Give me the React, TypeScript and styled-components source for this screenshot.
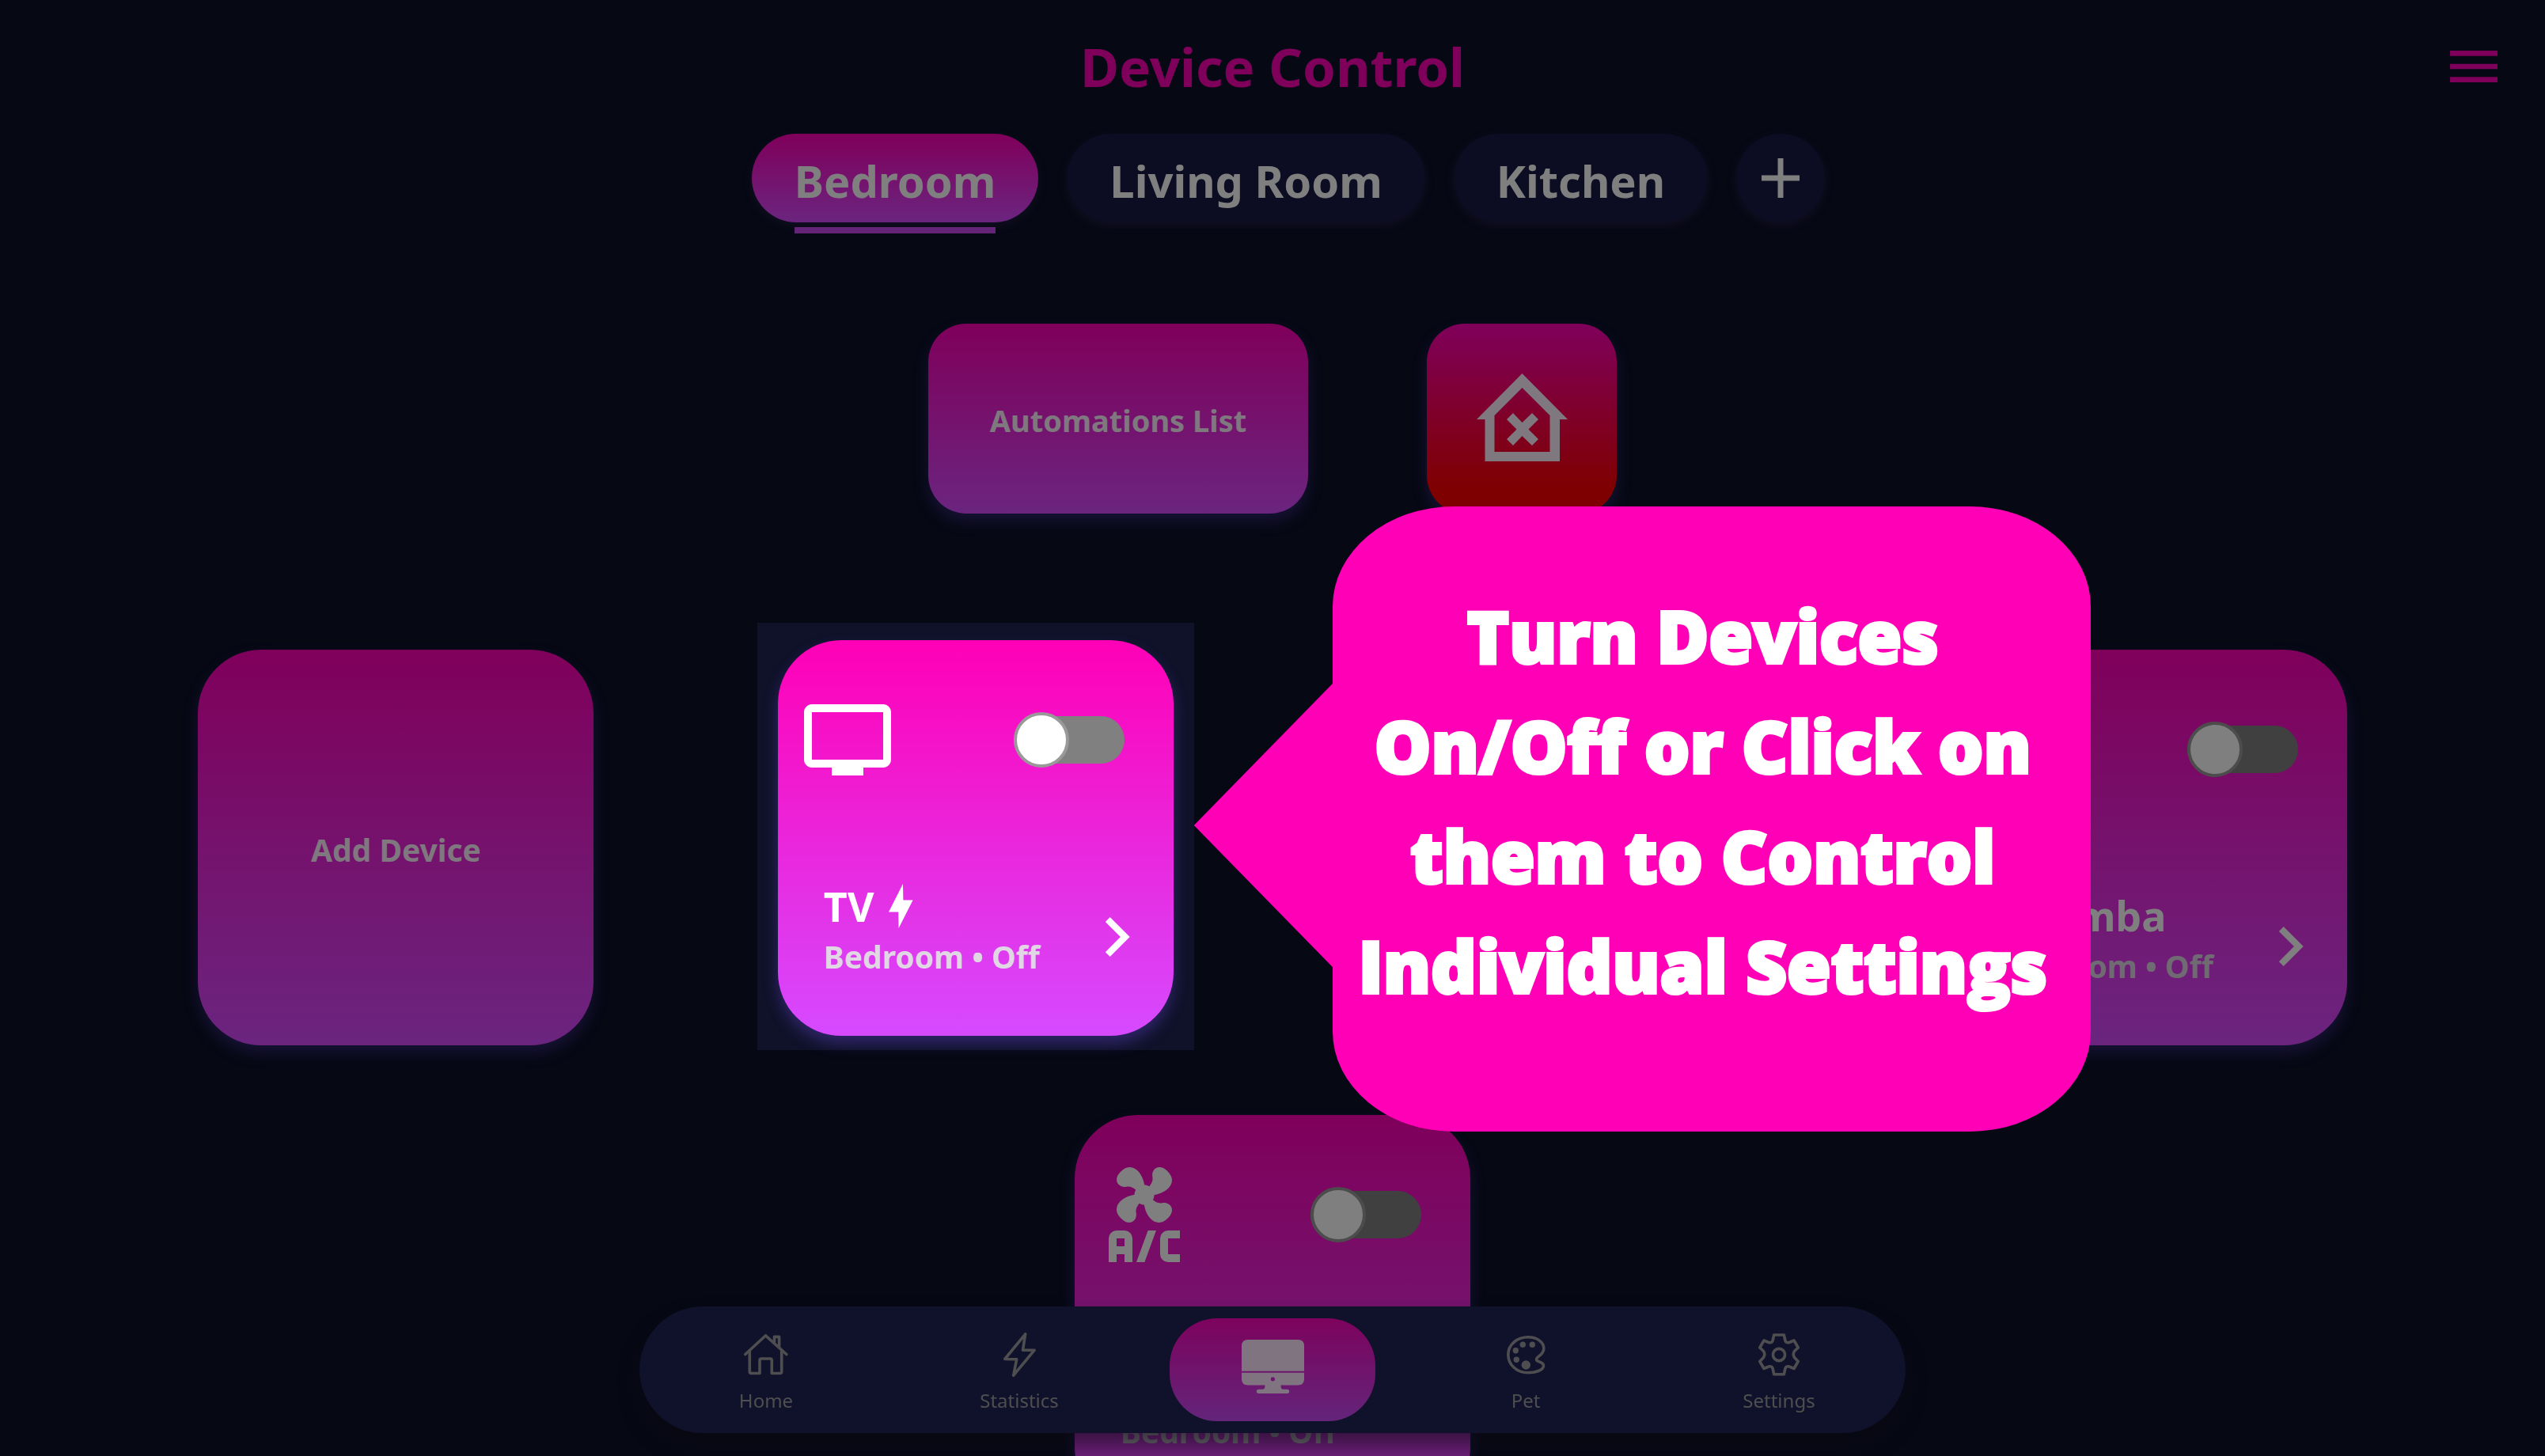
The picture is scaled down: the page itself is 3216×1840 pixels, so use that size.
import React from "react";
import styled, { createGlobalStyle } from "styled-components";
import { MdTv, MdChevronRight, MdMenu } from "react-icons/md";

const fontStack = `"Noto Sans", "Open Sans", sans-serif`;
const pinkToPurple = "linear-gradient(180deg, #ff00b6 0%, #d64aff 100%)";
const glow = "0 10px 18px rgba(94, 66, 200, 0.4)";

const GlobalStyle = createGlobalStyle`
  *, *::before, *::after { box-sizing: border-box; }
  body {
    margin: 0;
    overflow: hidden;
    background: #0c1028;
    color: #fff;
    font-family: ${fontStack};
  }
  button, input { font: inherit; color: inherit; margin: 0; }
  button { border: 0; padding: 0; background: none; cursor: pointer; }
  svg { display: block; flex: none; }
`;

const Page = styled.div`
  height: 100vh;
  overflow: hidden;
`;

const Header = styled.header`
  display: grid;
  grid-template-columns: 1fr auto 1fr;
  align-items: center;
  padding: 40px 50px 0;
`;

const Title = styled.h1`
  grid-column: 2;
  margin: 0;
  font-size: 67px;
  line-height: 88px;
  font-weight: 700;
  color: #ff00b6;
`;

const MenuButton = styled.button`
  justify-self: end;
  font-size: 80px;
  color: #ff00b6;
`;

const Tabs = styled.nav`
  display: flex;
  justify-content: center;
  gap: 36px;
  height: 126px;
  margin-top: 41px;
  padding-left: 40px;
`;

const TabItem = styled.div`
  display: flex;
  flex-direction: column;
`;

const Tab = styled.button<{ $active?: boolean }>`
  height: 112px;
  padding: 6px 54px 0;
  border-radius: 56px;
  font-size: 56px;
  font-weight: 700;
  white-space: nowrap;
  background: ${(p) => (p.$active ? pinkToPurple : "#181844")};
  box-shadow: 0 4px 12px rgba(88, 56, 128, 0.3);
`;

const TabUnderline = styled.span`
  height: 8px;
  margin: 6px 54px 0;
  background: #c84af0;
`;

const AddRoom = styled.button`
  display: grid;
  place-items: center;
  width: 112px;
  height: 112px;
  border-radius: 50%;
  background: #181844;
  box-shadow: 0 4px 12px rgba(88, 56, 128, 0.3);
`;

const Actions = styled.section`
  display: flex;
  justify-content: center;
  gap: 150px;
  margin-top: 114px;
`;

const ActionButton = styled.button<{ $danger?: boolean }>`
  display: flex;
  align-items: center;
  justify-content: center;
  width: ${(p) => (p.$danger ? "240px" : "480px")};
  height: 240px;
  padding-top: ${(p) => (p.$danger ? "0" : "4px")};
  border-radius: 48px;
  font-size: 38px;
  font-weight: 700;
  color: #fff0ff;
  background: ${(p) =>
    p.$danger ? "linear-gradient(180deg, #ff00b6 0%, #ff0000 88%)" : pinkToPurple};
  box-shadow: ${glow};
`;

const Devices = styled.main`
  display: flex;
  flex-wrap: wrap;
  justify-content: space-evenly;
  gap: 88px 140px;
  margin-top: 172px;
  padding: 0 152px;
`;

const Slot = styled.div`
  position: relative;
  width: 500px;
  height: 500px;
`;

const AddCard = styled.button`
  width: 100%;
  height: 100%;
  padding-top: 4px;
  border-radius: 80px;
  font-size: 39px;
  font-weight: 700;
  color: #fff0ff;
  background: ${pinkToPurple};
  box-shadow: ${glow};
`;

const Card = styled.article`
  display: flex;
  flex-direction: column;
  justify-content: space-between;
  width: 500px;
  height: 500px;
  padding: 66px 22px 54px 28px;
  border-radius: 80px;
  background: ${pinkToPurple};
  box-shadow: ${glow};
`;

const CardTop = styled.div`
  display: flex;
  align-items: center;
  justify-content: space-between;
  min-height: 120px;
  padding-right: 40px;
`;

const CardBottom = styled.div`
  display: flex;
  align-items: center;
  justify-content: space-between;
  padding-left: 30px;
`;

const CardText = styled.div`
  display: flex;
  flex-direction: column;
  gap: 6px;
  padding-bottom: 20px;
`;

const DeviceName = styled.h2`
  display: flex;
  align-items: center;
  gap: 18px;
  margin: 0;
  font-size: 52px;
  line-height: 64px;
  font-weight: 700;
`;

const DeviceState = styled.p`
  margin: 0;
  font-size: 39px;
  line-height: 52px;
  font-weight: 700;
  white-space: nowrap;
  color: #e0d6e4;
`;

const OpenButton = styled.button`
  font-size: 100px;
`;

const Switch = styled.input`
  position: relative;
  appearance: none;
  width: 140px;
  height: 60px;
  border-radius: 30px;
  background: #808080;
  cursor: pointer;

  &::before {
    content: "";
    position: absolute;
    top: -5px;
    left: 0;
    width: 70px;
    height: 70px;
    border: 4px solid #999;
    border-radius: 50%;
    background: #fff;
  }

  &:checked::before {
    left: 70px;
  }
`;

const NavBar = styled.nav`
  position: fixed;
  z-index: 3;
  left: 50%;
  bottom: 29px;
  display: flex;
  align-items: center;
  width: 1600px;
  max-width: 100%;
  height: 160px;
  transform: translateX(-50%);
  border-radius: 80px;
  background: #202254;
  box-shadow: 0 16px 24px rgba(24, 20, 40, 0.55);
`;

const NavLink = styled.a`
  flex: 1;
  display: flex;
  flex-direction: column;
  align-items: center;
  gap: 14px;
  padding-top: 8px;
  font-size: 24px;
  line-height: 32px;
  color: #9c9ca0;
  text-decoration: none;
`;

const NavIcon = styled.span`
  display: grid;
  place-items: center;
  height: 56px;
`;

const NavActive = styled.a`
  display: grid;
  place-items: center;
  width: 260px;
  height: 130px;
  margin: 0 30px;
  padding-bottom: 8px;
  border-radius: 60px;
  color: #ffe8ff;
  background: linear-gradient(180deg, #fa06bc 0%, #c64af4 100%);
`;

const Overlay = styled.div`
  position: fixed;
  z-index: 5;
  inset: 0;
  background: rgba(0, 0, 0, 0.5);
`;

const Highlight = styled.div`
  position: absolute;
  z-index: 10;
  inset: -34px -20px -6px -32px;
  padding: 22px 26px;
  background: #10122a;
`;

const Tip = styled.div`
  position: absolute;
  top: -147px;
  left: 100%;
  display: flex;
  align-items: center;
`;

const TipTail = styled.span`
  width: 176px;
  height: 360px;
  margin-top: 16px;
  background: #ff00b6;
  clip-path: polygon(100% 0, 100% 100%, 0 50%);
`;

const TipBody = styled.p`
  width: 958px;
  height: 790px;
  margin: 0 0 0 -1px;
  padding: 94px 22px 0 0;
  border-radius: 16%;
  background: #ff00b6;
  font-family: "Open Sans", "Noto Sans", sans-serif;
  font-size: 90px;
  line-height: 139px;
  font-weight: 800;
  font-variant-ligatures: none;
  text-align: center;
  white-space: nowrap;
  -webkit-text-stroke: 4px #fff;
`;

const PlusIcon = () => (
  <svg width="48" height="50" viewBox="0 0 48 50" fill="none" stroke="currentColor" strokeWidth="7">
    <path d="M24 0V50M0 25H48" />
  </svg>
);

const HomeOffIcon = () => (
  <svg width="115" height="115" viewBox="0 0 115 115" fill="currentColor">
    <path
      fillRule="evenodd"
      d="M57.5 0L115 58H105V111H10.5V58H0ZM57.5 18L22.5 53V99H92.5V53Z"
    />
    <path d="M46 50L57.5 62L70 50L78 58L65.5 70.5L78 83L70 91L57.5 79L46 91L38 83L50.5 70.5L38 58Z" />
  </svg>
);

const BoltIcon = () => (
  <svg width="31" height="56" viewBox="0 0 31 56" fill="currentColor">
    <path d="M0 35.5L18 0L18.4 20.4H30.6L12.6 56L12.2 35.5Z" />
  </svg>
);

const AirConditionerIcon = () => (
  <svg width="120" height="120" viewBox="0 0 24 24" fill="currentColor">
    <path d="M6.59,0.66C8.93,-1.15 11.47,1.06 12.04,4.5C12.47,4.5 12.89,4.62 13.27,4.84C13.79,4.24 14.25,3.42 14.07,2.5C13.65,0.35 16.06,-1.39 18.35,1.58C20.16,3.92 17.95,6.46 14.5,7.03C14.5,7.46 14.39,7.89 14.16,8.27C14.76,8.78 15.58,9.24 16.5,9.06C18.63,8.64 20.38,11.04 17.41,13.34C15.07,15.15 12.53,12.94 11.96,9.5C11.53,9.5 11.11,9.37 10.74,9.15C10.22,9.75 9.75,10.58 9.93,11.5C10.35,13.64 7.94,15.39 5.65,12.42C3.83,10.07 6.05,7.53 9.5,6.97C9.5,6.54 9.63,6.12 9.85,5.74C9.25,5.23 8.43,4.76 7.5,4.94C5.37,5.36 3.62,2.96 6.59,0.66M5,16H7A2,2 0 0,1 9,18V24H7V22H5V24H3V18A2,2 0 0,1 5,16M5,18V20H7V18H5M12.93,16H15L12.07,24H10L12.93,16M18,16H21V18H18V22H21V24H18A2,2 0 0,1 16,22V18A2,2 0 0,1 18,16Z" />
  </svg>
);

const lineIcon = {
  fill: "none",
  stroke: "currentColor",
  strokeWidth: 3.6,
  strokeLinejoin: "round" as const,
  strokeLinecap: "round" as const,
};

const HomeIcon = () => (
  <svg width="56" height="52" viewBox="0 0 56 52" {...lineIcon}>
    <path d="M1.8 25.5L27.5 1.8L53.8 25.5" />
    <path d="M7.3 21V47.5Q7.3 49.5 9.3 49.5H20V33Q20 31 22 31H33.3Q35.3 31 35.3 33V49.5H45.7Q47.7 49.5 47.7 47.5V21" />
    <path d="M38.5 10V3.4H44.6V16" />
  </svg>
);

const StatsIcon = () => (
  <svg width="41" height="56" viewBox="0 0 41 56" {...lineIcon}>
    <path d="M1.8 33.5L27.7 1.8L24.5 22.2H39.2L12.7 54.2L16.7 33.7Z" />
  </svg>
);

const PetIcon = () => (
  <svg width="49" height="49" viewBox="0 0 49 49" {...lineIcon}>
    <path d="M27 1.8C38 1.8 46.8 8 46.8 16C46.8 25 37.5 25.5 37.5 30C37.5 34 46.5 32 46.5 38C46.5 43.5 36 46.8 27 46.8C13 46.8 1.8 37 1.8 24C1.8 11 13 1.8 27 1.8Z" />
    <g fill="currentColor" stroke="none">
      <circle cx="11.3" cy="18.7" r="3.7" />
      <circle cx="20.3" cy="11.3" r="3.7" />
      <circle cx="32.3" cy="11.3" r="3.7" />
      <circle cx="12.3" cy="30.3" r="3.7" />
      <circle cx="24.3" cy="37" r="5.7" />
    </g>
  </svg>
);

const GearIcon = () => (
  <svg width="52" height="54" viewBox="0 0 52 54" {...lineIcon}>
    <path d="M19.7 2H32.3L34 9.5Q35.5 12.5 39 11.5L45 9L50.2 18L45.5 22.5Q43 26.5 45.5 30.5L50.2 35.5L45 44.5L39 42Q35.5 41 34 44L32.3 51.8H19.7L18 44Q16.5 41 13 42L7 44.5L1.8 35.5L6.5 30.5Q9 26.5 6.5 22.5L1.8 18L7 9L13 11.5Q16.5 12.5 18 9.5Z" />
    <circle cx="26" cy="27" r="7.6" />
  </svg>
);

const MonitorIcon = () => (
  <svg width="79" height="68" viewBox="0 0 79 68" fill="currentColor">
    <path d="M8 0H71Q79 0 79 8V39.7H0V8Q0 0 8 0Z" />
    <path
      fillRule="evenodd"
      d="M0 41.7H79V49.5Q79 57.5 71 57.5H49.5Q49.5 62.7 52 62.7H57.5A2.6 2.6 0 0 1 57.5 68H21.5A2.6 2.6 0 0 1 21.5 62.7H27Q29.5 62.7 29.5 57.5H8Q0 57.5 0 49.5ZM39.4 47.2A2.6 2.6 0 1 0 39.4 52.4A2.6 2.6 0 1 0 39.4 47.2Z"
    />
  </svg>
);

type DeviceProps = {
  name: string;
  icon?: React.ReactNode;
  automated?: boolean;
};

const Device = ({ name, icon, automated }: DeviceProps) => (
  <Card>
    <CardTop>
      {icon ?? <span />}
      <Switch type="checkbox" aria-label={`${name} power`} />
    </CardTop>
    <CardBottom>
      <CardText>
        <DeviceName>
          {name}
          {automated && <BoltIcon />}
        </DeviceName>
        <DeviceState>Bedroom • Off</DeviceState>
      </CardText>
      <OpenButton aria-label={`${name} settings`}>
        <MdChevronRight />
      </OpenButton>
    </CardBottom>
  </Card>
);

export default function App() {
  return (
    <>
      <GlobalStyle />
      <Page>
        <Header>
          <Title>Device Control</Title>
          <MenuButton aria-label="Menu">
            <MdMenu />
          </MenuButton>
        </Header>

        <Tabs>
          <TabItem>
            <Tab $active>Bedroom</Tab>
            <TabUnderline />
          </TabItem>
          <TabItem>
            <Tab>Living Room</Tab>
          </TabItem>
          <TabItem>
            <Tab>Kitchen</Tab>
          </TabItem>
          <AddRoom aria-label="Add room">
            <PlusIcon />
          </AddRoom>
        </Tabs>

        <Actions>
          <ActionButton>Automations List</ActionButton>
          <ActionButton $danger aria-label="Turn everything off">
            <HomeOffIcon />
          </ActionButton>
        </Actions>

        <Devices>
          <Slot>
            <AddCard>Add Device</AddCard>
          </Slot>
          <Slot>
            <Highlight>
              <Device name="TV" icon={<MdTv size={120} />} automated />
              <Tip role="tooltip">
                <TipTail />
                <TipBody>
                  Turn Devices
                  <br />
                  On/Off or Click on
                  <br />
                  them to Control
                  <br />
                  Individual Settings
                </TipBody>
              </Tip>
            </Highlight>
          </Slot>
          <Slot />
          <Slot>
            <Device name="Roomba" />
          </Slot>
          <Slot>
            <Device name="A/C" icon={<AirConditionerIcon />} />
          </Slot>
        </Devices>
      </Page>

      <NavBar>
        <NavLink href="#home">
          <NavIcon>
            <HomeIcon />
          </NavIcon>
          Home
        </NavLink>
        <NavLink href="#statistics">
          <NavIcon>
            <StatsIcon />
          </NavIcon>
          Statistics
        </NavLink>
        <NavActive href="#devices" aria-label="Devices">
          <MonitorIcon />
        </NavActive>
        <NavLink href="#pet">
          <NavIcon>
            <PetIcon />
          </NavIcon>
          Pet
        </NavLink>
        <NavLink href="#settings">
          <NavIcon>
            <GearIcon />
          </NavIcon>
          Settings
        </NavLink>
      </NavBar>
      <Overlay />
    </>
  );
}
